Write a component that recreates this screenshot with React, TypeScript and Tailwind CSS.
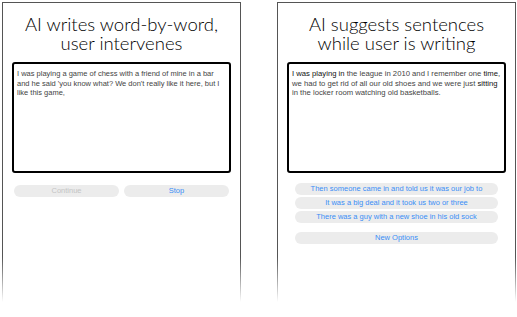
import React from "react"

const Panel = ({ title, children }: { title: React.ReactNode; children: React.ReactNode }) => (
  <div className="w-[239px] h-[300px] bg-gradient-to-b from-[#555] via-[#555] via-85% to-white px-px pt-px">
    <div className="h-full bg-white px-[9px]">
      <h1 className="pt-[12px] text-center font-['Lato',sans-serif] text-[18.5px] font-light leading-[19px] text-black">
        {title}
      </h1>
      {children}
    </div>
  </div>
)

const Editor = ({ children, className = "" }: { children: React.ReactNode; className?: string }) => (
  <div
    className={`mt-[9px] h-[111px] rounded-[3px] border-2 border-black pl-[3px] pt-[5px] font-['Liberation_Sans',sans-serif] leading-[9.5px] text-[#444] ${className}`}
  >
    {children}
  </div>
)

const Pill = ({ children, className = "" }: { children: React.ReactNode; className?: string }) => (
  <div
    className={`flex h-[12px] items-center justify-center rounded-full bg-[#ececec] font-['Liberation_Sans',sans-serif] text-[7.5px] ${className}`}
  >
    {children}
  </div>
)

const suggestions = [
  "Then someone came in and told us it was our job to",
  "It was a big deal and it took us two or three",
  "There was a guy with a new shoe in his old sock",
]

export default function App() {
  return (
    <div className="flex h-[317px] w-[517px] gap-[36px] bg-white pl-[2px] pt-[2px]">
      <Panel title={<>AI writes word-by-word,<br />user intervenes</>}>
        <Editor className="pr-[3px] text-[7.5px]">
          I was playing a game of chess with a friend of mine in a bar and he said 'you know what? We
          don't really like it here, but I like this game,
        </Editor>
        <div className="mt-[12px] flex gap-[5px] px-[2px]">
          <Pill className="flex-1 text-[#c4c4c4]">Continue</Pill>
          <Pill className="flex-1 text-[#3a8ef6]">Stop</Pill>
        </div>
      </Panel>
      <Panel title={<>AI suggests sentences<br />while user is writing</>}>
        <Editor className="pr-[1px] text-[7.7px]">
          <span className="text-[#111]">I was playing in</span> the league in 2010 and I remember one{" "}
          <span className="text-[#111]">time,</span> we had to get rid of all our old shoes and we were
          just <span className="text-[#111]">sitting</span> in the locker room watching old basketballs.
        </Editor>
        <div className="mt-[10px] flex flex-col gap-[2px] px-[8px]">
          {suggestions.map((s) => (
            <Pill key={s} className="text-[#3a8ef6]">{s}</Pill>
          ))}
          <Pill className="mt-[7px] text-[#3a8ef6]">New Options</Pill>
        </div>
      </Panel>
    </div>
  )
}
